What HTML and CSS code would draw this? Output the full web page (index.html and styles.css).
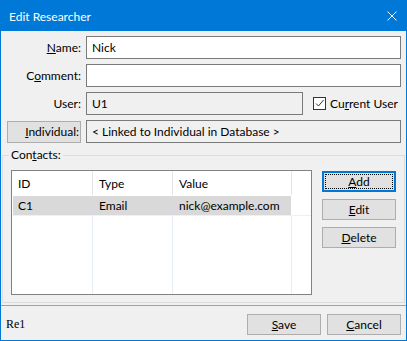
FILE: index.html
```html
<!DOCTYPE html>
<html lang="en">
<head>
    <meta charset="UTF-8">
    <title>Edit Researcher</title>
    <link rel="stylesheet" href="styles.css">
</head>
<body>

<div class="window">
    <div class="titlebar">
        <span class="title">Edit Researcher</span>
        <svg class="close" width="10" height="10" viewBox="0 0 10 10">
            <path d="M0.5 0.5 L9.5 9.5 M9.5 0.5 L0.5 9.5" stroke="#fff" stroke-width="1" fill="none"/>
        </svg>
    </div>

    <div class="form">
        <label class="field-label"><u>N</u>ame:</label>
        <div class="textbox">Nick</div>

        <label class="field-label">C<u>o</u>mment:</label>
        <div class="textbox"></div>

        <label class="field-label">User:</label>
        <div class="user-line">
            <div class="textbox readonly user-box">U1</div>
            <div class="check-wrap">
                <span class="checkbox">
                    <svg width="11" height="11" viewBox="0 0 11 11">
                        <path d="M2 5.5 L4.5 8 L9.5 2" stroke="#333" stroke-width="1" fill="none"/>
                    </svg>
                </span>
                <span>Cu<u>r</u>rent User</span>
            </div>
        </div>

        <button class="btn btn-individual"><u>I</u>ndividual:</button>
        <div class="textbox readonly">&lt; Linked to Individual in Database &gt;</div>
    </div>

    <fieldset class="contacts">
        <legend>Con<u>t</u>acts:</legend>

        <div class="listview">
            <div class="lv-header">
                <span>ID</span>
                <span>Type</span>
                <span>Value</span>
            </div>
            <div class="lv-row">
                <span>C1</span>
                <span>Email</span>
                <span>nick@example.com</span>
            </div>
            <div class="lv-fill">
                <span></span>
                <span></span>
                <span></span>
            </div>
        </div>

        <div class="side-buttons">
            <button class="btn btn-focus"><u>A</u>dd</button>
            <button class="btn"><u>E</u>dit</button>
            <button class="btn"><u>D</u>elete</button>
        </div>
    </fieldset>

    <div class="statusbar">
        <span class="status-text">Re1</span>
        <div class="dialog-buttons">
            <button class="btn"><u>S</u>ave</button>
            <button class="btn"><u>C</u>ancel</button>
        </div>
    </div>
</div>

</body>
</html>
```

FILE: styles.css
```css
* {
    box-sizing: border-box;
}

body {
    margin: 0;
    font-family: 'Lato', sans-serif;
    font-size: 12px;
    color: #000;
    background-color: #f0f0f0;
}

.window {
    width: 407px;
    height: 341px;
    border: 1px solid #0078d7;
    background-color: #f0f0f0;
    display: flex;
    flex-direction: column;
    overflow: hidden;
}

.titlebar {
    flex: none;
    height: 30px;
    background-color: #0078d7;
    color: #fff;
    display: flex;
    align-items: center;
    justify-content: space-between;
    padding: 0 9px 0 8px;
}

.close {
    display: block;
}

/* Top form */
.form {
    flex: none;
    display: grid;
    grid-template-columns: 74px 1fr;
    grid-auto-rows: 23px;
    column-gap: 5px;
    row-gap: 5px;
    padding: 5px 5px 0 6px;
}

.field-label {
    display: flex;
    align-items: center;
    justify-content: flex-end;
}

.textbox {
    height: 23px;
    border: 1px solid #7a7a7a;
    background-color: #fff;
    padding: 0 5px;
    display: flex;
    align-items: center;
    white-space: nowrap;
}

.textbox.readonly {
    background-color: #f0f0f0;
}

.user-line {
    display: flex;
    align-items: center;
}

.user-box {
    flex: none;
    width: 217px;
}

.check-wrap {
    display: flex;
    align-items: center;
    gap: 4px;
    margin-left: 10px;
}

.checkbox {
    width: 13px;
    height: 13px;
    border: 1px solid #333;
    background-color: #fff;
    display: block;
}

.checkbox svg {
    display: block;
}

u {
    text-decoration-thickness: 1px;
    text-underline-offset: 1px;
}

/* Buttons */
.btn {
    font: inherit;
    color: #000;
    background-color: #e1e1e1;
    border: 1px solid #adadad;
    width: 74px;
    height: 21px;
    padding: 0;
    margin: 0;
}

.btn-individual {
    height: 22px;
    align-self: center;
    text-align: right;
    padding-right: 1px;
}

.btn-focus {
    border: 2px solid #0078d7;
    outline: 1px dotted #000;
    outline-offset: -4px;
}

/* Contacts group */
.contacts {
    flex: 1;
    min-height: 0;
    min-width: 0;
    margin: 4px 1px 0;
    border: 1px solid #dcdcdc;
    padding: 7px 8px;
    display: flex;
    gap: 10px;
}

.contacts legend {
    line-height: 16px;
    padding: 0 2px;
    margin-left: -2px;
}

.listview {
    flex: none;
    width: 301px;
    height: 125px;
    border: 1px solid #828282;
    background-color: #fff;
    display: flex;
    flex-direction: column;
}

.lv-header {
    display: grid;
    grid-template-columns: 81px 80px 119px;
    height: 24px;
}

.lv-header span {
    border-right: 1px solid #e5e5e5;
    padding-left: 6px;
    display: flex;
    align-items: center;
}

.lv-row {
    display: grid;
    grid-template-columns: 80px 80px 118px;
    width: 278px;
    height: 19px;
    margin: 1px 0 0 1px;
    background-color: #d9d9d9;
}

.lv-row span {
    padding-left: 6px;
    display: flex;
    align-items: center;
}

.lv-row span:first-child {
    padding-left: 5px;
}

.lv-fill {
    flex: 1;
    display: grid;
    grid-template-columns: 81px 80px 119px;
    border-top: 1px solid #f0f0f0;
}

.lv-fill span {
    border-right: 1px solid #e6edf8;
}

.side-buttons {
    display: flex;
    flex-direction: column;
    gap: 7px;
    padding-top: 1px;
}

/* Bottom bar */
.statusbar {
    flex: none;
    height: 35px;
    margin-top: 2px;
    border-top: 1px solid #a0a0a0;
    padding: 8px 5px 5px 5px;
    display: flex;
    align-items: center;
    justify-content: space-between;
}

.status-text {
    font-family: 'Liberation Serif', serif;
    font-size: 12px;
}

.dialog-buttons {
    display: flex;
    gap: 6px;
}
```
